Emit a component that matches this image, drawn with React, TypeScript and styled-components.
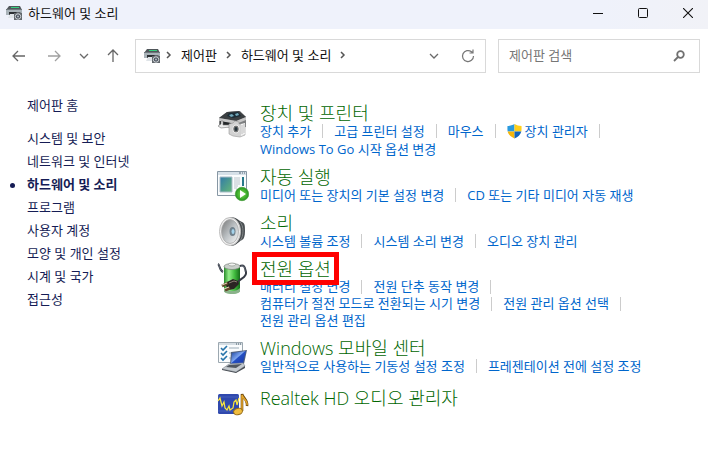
import React from "react";
import styled, { createGlobalStyle } from "styled-components";

const GlobalStyle = createGlobalStyle`
  * { box-sizing: border-box; }
  body {
    margin: 0;
    background: #fff;
    color: #111;
    font-family: "Open Sans", "Noto Sans CJK KR", sans-serif;
    font-size: 13px;
    line-height: 18px;
  }
  button, input { font: inherit; color: inherit; }
  ul, h2 { margin: 0; padding: 0; list-style: none; }
  svg { display: block; flex: none; }
`;

const Window = styled.div`
  min-height: 100vh;
  background: #fff;
`;

const TitleBar = styled.header`
  display: flex;
  align-items: center;
  justify-content: space-between;
  height: 29px;
  padding-left: 6px;
  background: linear-gradient(90deg, #eff2fb 85%, #f1f2f7);
`;

const WindowTitle = styled.div`
  display: flex;
  align-items: center;
  gap: 5px;
  padding-bottom: 3px;
`;

const IconButton = styled.button<{ $width?: number }>`
  display: flex;
  align-items: center;
  justify-content: center;
  width: ${(p) => p.$width ?? 24}px;
  height: 28px;
  padding: 0;
  border: 0;
  background: transparent;
`;

const WindowControls = styled.div`
  display: flex;
  padding-bottom: 3px;
`;

const Toolbar = styled.nav`
  display: flex;
  align-items: center;
  gap: 12px;
  padding: 10px 8px 0 7px;
`;

const HistoryButtons = styled.div`
  display: grid;
  grid-template-columns: 24px 46px 14px 32px;
`;

const Field = styled.div`
  display: flex;
  align-items: center;
  height: 34px;
  border: 1px solid #d9d9d9;
`;

const AddressBar = styled(Field)`
  flex: 1;
  padding-left: 8px;
`;

const Breadcrumbs = styled.div`
  display: flex;
  align-items: center;
  flex: 1;
  gap: 9px;
  padding-left: 5px;
  padding-bottom: 2px;
`;

const Crumb = styled.a`
  color: #111;
  text-decoration: none;
  white-space: nowrap;
`;

const SearchBox = styled(Field)`
  width: 202px;
  padding: 0 8px 0 10px;
`;

const SearchInput = styled.input`
  flex: 1;
  min-width: 0;
  padding: 0 0 2px;
  border: 0;
  outline: 0;
  background: transparent;
  &::placeholder { color: #767676; opacity: 1; }
`;

const Body = styled.div`
  display: grid;
  grid-template-columns: 217px 1fr;
  padding-top: 21px;
`;

const Sidebar = styled.aside`
  padding-left: 27px;
`;

const SideList = styled.ul`
  padding-top: 10px;
`;

const SideLink = styled.a<{ $active?: boolean }>`
  position: relative;
  display: block;
  line-height: 23px;
  color: #151c55;
  text-decoration: none;
  font-weight: ${(p) => (p.$active ? 600 : 400)};
  &::before {
    content: "";
    display: ${(p) => (p.$active ? "block" : "none")};
    position: absolute;
    left: -17px;
    top: 10px;
    width: 5px;
    height: 5px;
    border-radius: 50%;
    background: #151c55;
  }
`;

const Main = styled.main`
  padding: 10px 8px 0 0;
`;

const Section = styled.section<{ $spacious?: boolean }>`
  display: grid;
  grid-template-columns: 32px 1fr;
  column-gap: 11px;
  margin-bottom: ${(p) => (p.$spacious ? 14 : 10)}px;
  & > svg { margin-top: 2px; }
`;

const Heading = styled.h2`
  display: flex;
  font-size: 18px;
  line-height: 18px;
  font-weight: 300;
`;

const HeadingLink = styled.a<{ $marked?: boolean }>`
  position: relative;
  color: #006600;
  text-decoration: none;
  white-space: nowrap;
  &::after {
    content: "";
    display: ${(p) => (p.$marked ? "block" : "none")};
    position: absolute;
    inset: -8px -8px -7px;
    border: 5px solid #ff0000;
  }
`;

const TaskList = styled.ul<{ $compact?: boolean }>`
  display: flex;
  flex-wrap: wrap;
  line-height: ${(p) => (p.$compact ? 17 : 18)}px;
`;

const Task = styled.li`
  display: flex;
  align-items: center;
  &:not(:last-child)::after {
    content: "";
    width: 1px;
    height: 14px;
    margin: 0 11px;
    background: #ccc;
  }
`;

const TaskLink = styled.a`
  display: flex;
  align-items: center;
  gap: 3px;
  color: #0066cc;
  text-decoration: none;
  white-space: nowrap;
`;

const HardwareIcon = () => (
  <svg width="17" height="16" viewBox="0 0 17 16">
    <path d="M3 1h11l2 4H0z" fill="#50565a" />
    <path d="M5 2h8v1H5z" fill="#35d07f" />
    <path d="M0 4h16v6H0z" fill="#a9b3b9" />
    <path d="M0 4h16v1H0z" fill="#6e777c" />
    <path d="M3 7h10v3H3z" fill="#2b2f33" />
    <path d="M4 9h7l-2 4H2z" fill="#dfe4e8" />
    <path d="M8 8h2l1-1h3l1 1h1v7H8z" fill="#62686d" />
    <circle cx="12" cy="11.500" r="2.700" fill="#48505a" stroke="#d4d9dd" />
    <circle cx="12" cy="11.500" r="1" fill="#b5bdc6" />
  </svg>
);

const Arrow = ({ color, d }: { color: string; d: string }) => (
  <svg width="14" height="14" viewBox="0 0 14 14" fill="none" stroke={color} strokeWidth="1.300">
    <path d={d} />
  </svg>
);

const ChevronDown = () => (
  <svg width="10" height="6" viewBox="0 0 10 6" fill="none" stroke="#6a6a6a" strokeWidth="1.300">
    <path d="M1 1l4 4 4-4" />
  </svg>
);

const ChevronRight = () => (
  <svg width="6" height="8" viewBox="0 0 6 8" fill="none" stroke="#555" strokeWidth="1.500">
    <path d="M1 1l3 3-3 3" />
  </svg>
);

const ShieldIcon = () => (
  <svg width="15" height="15" viewBox="0 0 15 15">
    <path d="M7.500 0v7.500H.700C.200 5 .500 3 .500 2 3 2 5.500 1 7.500 0z" fill="#2a9ade" />
    <path d="M7.500 0v7.500h6.800c.500-2.500.200-4.500.200-5.500-2.500 0-5-1-7-2z" fill="#ffcf1a" />
    <path d="M7.500 7.500v7C4 13 1.500 11 .700 7.500z" fill="#f5b50b" />
    <path d="M7.500 7.500v7c3.500-1.500 6-3.500 6.800-7z" fill="#1264bd" />
  </svg>
);

const PrinterIcon = () => (
  <svg width="32" height="32" viewBox="0 0 32 32">
    <path d="M2 12L10 6l13-1 6 6v10l-11 2L2 19z" fill="#7d7f80" />
    <path d="M2 12l8-6 12-1 7 6-9 4z" fill="#3b3f41" />
    <path d="M10 10l2-3 9-1 3 4-8 2z" fill="#1b2c36" />
    <path d="M12 9l3-1 2 2-3 1zM18 8l3-1 1 2-3 1z" fill="#72a9bb" />
    <path d="M2 12l17 3 10-4v3l-10 4-17-3z" fill="#c6c6c6" />
    <path d="M3 15l11 2v4L3 19z" fill="#242729" />
    <path d="M4 15h2v4h7v2l-9 1-3-2 3-2z" fill="#ececec" stroke="#777" strokeWidth=".600" />
    <path d="M12 18l4-1 2-2 4 1v2h6v11l-5 2-7-1-4-2z" fill="#d2d2d2" stroke="#999" strokeWidth=".600" />
    <path d="M24 18l4-1v11l-4 2z" fill="#f1f1f1" />
    <path d="M25 19v9M27 18v9" stroke="#ababab" strokeWidth=".700" />
    <ellipse cx="19" cy="23" rx="3.300" ry="4" fill="#747474" stroke="#f3f3f3" />
    <ellipse cx="19" cy="23" rx="1.500" ry="2" fill="#26343b" />
  </svg>
);

const AutoPlayIcon = () => (
  <svg width="32" height="32" viewBox="0 0 32 32">
    <defs>
      <linearGradient id="page" x2="1" y2="1"><stop stopColor="#3179a8" /><stop offset="1" stopColor="#65b878" /></linearGradient>
      <radialGradient id="play"><stop stopColor="#7be04e" /><stop offset="1" stopColor="#279720" /></radialGradient>
    </defs>
    <path d="M.500 1.500h29v24H.500z" fill="#fafcfd" stroke="#8797a4" />
    <path d="M1 2h28v3H1z" fill="#d6e0e8" />
    <path d="M22 3h2M25 3h1M27 3h1" stroke="#596b78" />
    <path d="M3 7h12v15H3z" fill="url(#page)" stroke="#a7bbc7" />
    <path d="M17 8h6M17 10h6M17 12h6M17 14h6M17 16h4M17 18h3" stroke="#bac4cb" />
    <path d="M25 7h2v9h-2z" fill="#287a8b" />
    <circle cx="25" cy="24" r="6.700" fill="url(#play)" stroke="#459b3a" strokeWidth=".700" />
    <path d="M23 20l6 4-6 4z" fill="#fff" />
  </svg>
);

const SpeakerIcon = () => (
  <svg width="32" height="32" viewBox="0 0 32 32">
    <defs>
      <linearGradient id="cone" x2="1" y2="1"><stop stopColor="#777" /><stop offset=".500" stopColor="#bcc1c4" /><stop offset="1" stopColor="#f8f8f8" /></linearGradient>
    </defs>
    <path d="M13 1c6 0 8 3 12 5 3 1 3 4 3 9s-1 8-3 9c-5 3-7 6-11 6z" fill="#4a4f52" />
    <path d="M23 6c4 4 4 14 0 19" fill="none" stroke="#828789" />
    <ellipse cx="13" cy="15.500" rx="10.500" ry="14" fill="#eee" stroke="#bdbdbd" />
    <ellipse cx="13" cy="15.500" rx="8.500" ry="12" fill="url(#cone)" stroke="#a3a3a3" strokeWidth=".700" />
    <ellipse cx="15.500" cy="15.500" rx="3" ry="4.500" fill="#71828d" />
    <ellipse cx="16" cy="15.500" rx="1.500" ry="2.500" fill="#a5d3eb" />
  </svg>
);

const PowerIcon = () => (
  <svg width="32" height="34" viewBox="0 0 32 34">
    <defs>
      <linearGradient id="cell"><stop stopColor="#268b29" /><stop offset=".300" stopColor="#94ed8a" /><stop offset=".650" stopColor="#43bd40" /><stop offset="1" stopColor="#146c18" /></linearGradient>
    </defs>
    <path d="M7 4v24c0 5 16 5 16 0V4z" fill="url(#cell)" />
    <path d="M7 26v3c0 4 16 4 16 0v-3c-3 4-13 4-16 0z" fill="#8bb28b" />
    <ellipse cx="15" cy="4.500" rx="8" ry="3" fill="#c9cfca" stroke="#777f78" strokeWidth=".700" />
    <ellipse cx="15" cy="2.500" rx="3.500" ry="1.500" fill="#f1f3f1" stroke="#8c928d" strokeWidth=".700" />
    <path d="M1 2c2 1 1 6 5 8M23 4c5-2 5 3 6 6 1 6-6 6-9 11" fill="none" stroke="#343944" strokeWidth="2" />
    <path d="M1 2c2 1 1 6 5 8M24 4c4-1 4 3 4 6" fill="none" stroke="#858c98" strokeWidth=".600" />
    <path d="M10 20l6-3 5 2 1 3-5 5-5 1-3-4z" fill="#2b2523" />
    <path d="M12 21l5-2 3 1" fill="none" stroke="#8b7d72" />
    <path d="M11 21l-6 3M13 26l-5 2" stroke="#604626" strokeWidth="3" />
    <path d="M10 21l-5 2M12 25l-5 2" stroke="#e3d7bd" />
  </svg>
);

const MobilityIcon = () => (
  <svg width="32" height="32" viewBox="0 0 32 32">
    <defs>
      <linearGradient id="screen" x2="1" y2="1"><stop stopColor="#163f9b" /><stop offset=".450" stopColor="#7da5f0" /><stop offset=".500" stopColor="#244fc2" /><stop offset="1" stopColor="#1735a6" /></linearGradient>
    </defs>
    <path d="M1.500 1.500h24v20h-24z" fill="#fafcfd" stroke="#9ca8b0" />
    <path d="M2 2h23v2H2z" fill="#d5dde3" />
    <path d="M19 3h1M21 3h1M23 3h1" stroke="#435866" />
    <path d="M4 7l2 2 4-4M4 12l2 2 4-4M4 17l2 2 4-4" fill="none" stroke="#2774aa" strokeWidth="1.600" />
    <path d="M12 7h10M12 12h4M12 17h2" stroke="#9aabb7" />
    <path d="M14 11l16-2-3 14-14 1z" fill="#50617e" />
    <path d="M15 12l14-2-3 12-12 1z" fill="url(#screen)" />
    <path d="M12 23l14-1 2 3-9 6-14-3z" fill="#c3c9ce" stroke="#8b9299" strokeWidth=".700" />
    <path d="M12 24l13-1-6 4-10-1z" fill="#50575e" />
    <path d="M5 28l14 3 9-6v2l-9 5-14-3z" fill="#494e55" />
  </svg>
);

const AudioIcon = () => (
  <svg width="32" height="28" viewBox="0 0 32 28">
    <rect x="1" y="3" width="21" height="20" rx="1.500" fill="#3049ad" />
    <path d="M1 6h21M1 20h21" stroke="#4460bc" />
    <path d="M1 10l2-3 2 8 2-4 1 6 2 2 2-4 1 4 3-2 1-6 2-2 1 5 2-7" fill="none" stroke="#ffe93a" strokeWidth="1.200" />
    <path d="M25 20V3c1 4 6 6 5 12" fill="none" stroke="#6d4a10" strokeWidth="2.600" />
    <path d="M25 20V4c1 4 6 6 5 10" fill="none" stroke="#e6a72b" strokeWidth="1.500" />
    <ellipse cx="21" cy="20.500" rx="4.500" ry="3.200" fill="#f0bd3e" stroke="#956a17" transform="rotate(-15 21 20.500)" />
  </svg>
);

const sideItems = [
  "시스템 및 보안", "네트워크 및 인터넷", "하드웨어 및 소리", "프로그램",
  "사용자 계정", "모양 및 개인 설정", "시계 및 국가", "접근성",
];

type Category = {
  title: string;
  icon: React.ReactNode;
  tasks: string[];
  marked?: boolean;
  compact?: boolean;
  spacious?: boolean;
};

const categories: Category[] = [
  { title: "장치 및 프린터", icon: <PrinterIcon />, tasks: ["장치 추가", "고급 프린터 설정", "마우스", "장치 관리자", "Windows To Go 시작 옵션 변경"] },
  { title: "자동 실행", icon: <AutoPlayIcon />, tasks: ["미디어 또는 장치의 기본 설정 변경", "CD 또는 기타 미디어 자동 재생"] },
  { title: "소리", icon: <SpeakerIcon />, tasks: ["시스템 볼륨 조정", "시스템 소리 변경", "오디오 장치 관리"] },
  { title: "전원 옵션", icon: <PowerIcon />, marked: true, compact: true, tasks: ["배터리 설정 변경", "전원 단추 동작 변경", "컴퓨터가 절전 모드로 전환되는 시기 변경", "전원 관리 옵션 선택", "전원 관리 옵션 편집"] },
  { title: "Windows 모바일 센터", icon: <MobilityIcon />, spacious: true, tasks: ["일반적으로 사용하는 기동성 설정 조정", "프레젠테이션 전에 설정 조정"] },
  { title: "Realtek HD 오디오 관리자", icon: <AudioIcon />, tasks: [] },
];

export default function App() {
  return (
    <Window>
      <GlobalStyle />
      <TitleBar>
        <WindowTitle><HardwareIcon />하드웨어 및 소리</WindowTitle>
        <WindowControls>
          <IconButton $width={40} aria-label="최소화">
            <svg width="10" height="10" viewBox="0 0 10 10" stroke="#111"><path d="M0 5.500h10" /></svg>
          </IconButton>
          <IconButton $width={50} aria-label="최대화">
            <svg width="10" height="10" viewBox="0 0 10 10" fill="none" stroke="#111"><rect x=".500" y=".500" width="9" height="9" rx="1" /></svg>
          </IconButton>
          <IconButton $width={40} aria-label="닫기">
            <svg width="10" height="10" viewBox="0 0 10 10" stroke="#111" strokeWidth="1.100"><path d="M0 0l10 10M10 0L0 10" /></svg>
          </IconButton>
        </WindowControls>
      </TitleBar>
      <Toolbar>
        <HistoryButtons>
          <IconButton aria-label="뒤로"><Arrow color="#666" d="M13 7H1M6 2L1 7l5 5" /></IconButton>
          <IconButton $width={46} aria-label="앞으로"><Arrow color="#a0a0a0" d="M1 7h12M8 2l5 5-5 5" /></IconButton>
          <IconButton $width={14} aria-label="최근 위치"><ChevronDown /></IconButton>
          <IconButton $width={44} aria-label="위로"><Arrow color="#666" d="M7 13V1M2 6l5-5 5 5" /></IconButton>
        </HistoryButtons>
        <AddressBar>
          <HardwareIcon />
          <Breadcrumbs>
            <ChevronRight /><Crumb href="#home">제어판</Crumb>
            <ChevronRight /><Crumb href="#hardware">하드웨어 및 소리</Crumb>
            <ChevronRight />
          </Breadcrumbs>
          <IconButton $width={34} aria-label="이전 위치"><ChevronDown /></IconButton>
          <IconButton $width={34} aria-label="새로 고침">
            <svg width="14" height="14" viewBox="0 0 14 14" fill="none" stroke="#777" strokeWidth="1.200">
              <path d="M12.500 7A5.500 5.500 0 1 1 10.500 2.800L12 4M12 .500V4H8.500" />
            </svg>
          </IconButton>
        </AddressBar>
        <SearchBox>
          <SearchInput type="search" aria-label="제어판 검색" placeholder="제어판 검색" />
          <IconButton aria-label="검색">
            <svg width="12" height="12" viewBox="0 0 12 12" fill="none" stroke="#707070" strokeWidth="1.800">
              <circle cx="7.500" cy="4.500" r="3.300" /><path d="M5 7L1 11" />
            </svg>
          </IconButton>
        </SearchBox>
      </Toolbar>
      <Body>
        <Sidebar>
          <SideLink href="#home">제어판 홈</SideLink>
          <SideList>
            {sideItems.map((item, i) => (
              <li key={item}><SideLink href={`#section-${i}`} $active={i === 2}>{item}</SideLink></li>
            ))}
          </SideList>
        </Sidebar>
        <Main>
          {categories.map((c) => (
            <Section key={c.title} $spacious={c.spacious}>
              {c.icon}
              <div>
                <Heading><HeadingLink href="#category" $marked={c.marked}>{c.title}</HeadingLink></Heading>
                <TaskList $compact={c.compact}>
                  {c.tasks.map((t) => (
                    <Task key={t}>
                      <TaskLink href="#task">{t === "장치 관리자" && <ShieldIcon />}{t}</TaskLink>
                    </Task>
                  ))}
                </TaskList>
              </div>
            </Section>
          ))}
        </Main>
      </Body>
    </Window>
  );
}
